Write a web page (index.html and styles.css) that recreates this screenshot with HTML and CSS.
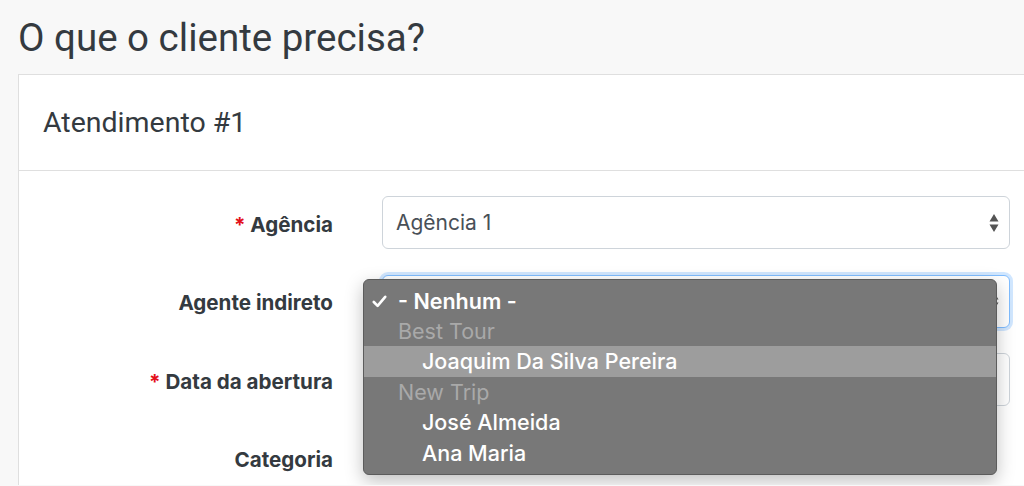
FILE: index.html
```html
<!DOCTYPE html>
<html lang="pt">
<head>
<meta charset="utf-8">
<title>Atendimento</title>
<link rel="stylesheet" href="styles.css">
</head>
<body>
<h1 class="page-title">O que o cliente precisa?</h1>
<div class="card">
  <div class="card-header">Atendimento #1</div>
  <div class="card-body">
    <div class="form-row">
      <label class="form-label"><span class="req">*</span> Agência</label>
      <div class="select">
        <span class="select-value">Agência 1</span>
        <svg class="select-arrows" width="10" height="20" viewBox="0 0 10 20"><path d="M5 1 L9.5 8.5 H0.5 Z M5 19 L9.5 11.5 H0.5 Z" fill="#555"/></svg>
      </div>
    </div>
    <div class="form-row">
      <label class="form-label">Agente indireto</label>
      <div class="select select-focus">
        <span class="select-value"></span>
        <svg class="select-arrows" width="10" height="20" viewBox="0 0 10 20"><path d="M5 1 L9.5 8.5 H0.5 Z M5 19 L9.5 11.5 H0.5 Z" fill="#555"/></svg>
      </div>
      <ul class="menu">
        <li class="menu-item menu-checked">
          <svg class="check" width="15" height="13" viewBox="0 0 15 13"><path d="M1.8 7 L5.6 10.8 L13.2 1.8" fill="none" stroke="#fff" stroke-width="2.6" stroke-linecap="round" stroke-linejoin="round"/></svg>
          - Nenhum -
        </li>
        <li class="menu-item menu-group">Best Tour</li>
        <li class="menu-item menu-sub menu-hover">Joaquim Da Silva Pereira</li>
        <li class="menu-item menu-group">New Trip</li>
        <li class="menu-item menu-sub">José Almeida</li>
        <li class="menu-item menu-sub">Ana Maria</li>
      </ul>
    </div>
    <div class="form-row">
      <label class="form-label"><span class="req">*</span> Data da abertura</label>
      <div class="input"></div>
    </div>
    <div class="form-row">
      <label class="form-label">Categoria</label>
      <div class="blank"></div>
    </div>
  </div>
</div>
</body>
</html>
```

FILE: styles.css
```css
html, body {
  margin: 0;
  padding: 0;
}
body {
  background: #f8f8f8;
  font-family: Inter, Roboto, "Liberation Sans", sans-serif;
  color: #343a40;
  overflow: hidden;
  height: 486px;
}
.page-title {
  margin: 0;
  height: 74px;
  box-sizing: border-box;
  padding: 15px 18px 0;
  font-family: Roboto, "Liberation Sans", sans-serif;
  font-weight: 400;
  font-size: 38.5px;
  line-height: 46px;
  color: #343a40;
}
.card {
  margin-left: 18px;
  width: 1020px;
  background: #fff;
  border: 1px solid #dfdfdf;
  border-right: none;
  border-bottom: none;
  height: 411px;
  box-sizing: border-box;
  overflow: hidden;
}
.card-header {
  height: 96px;
  box-sizing: border-box;
  display: flex;
  align-items: center;
  padding: 0 24px;
  border-bottom: 1px solid #dfdfdf;
  font-family: Roboto, "Liberation Sans", sans-serif;
  font-size: 28.5px;
  color: #343a40;
  background: #fff;
}
.card-body {
  padding-top: 25px;
  display: flex;
  flex-direction: column;
  gap: 25.5px;
}
.form-row {
  position: relative;
  display: grid;
  grid-template-columns: 314px 628px;
  column-gap: 49px;
  height: 53px;
  align-items: center;
}
.form-label {
  text-align: right;
  font-weight: 700;
  font-size: 20.6px;
  color: #343a40;
  padding-top: 3px;
}
.req {
  color: #e3101b;
}
.select, .input {
  height: 53px;
  box-sizing: border-box;
  border: 1px solid #ced4da;
  border-radius: 6px;
  background: #fff;
  display: flex;
  align-items: center;
  padding: 0 13px;
}
.select-value {
  flex: 1;
  font-size: 21px;
  color: #495057;
}
.select-arrows {
  margin-right: -3px;
}
.select-focus {
  border-color: #80bdff;
  box-shadow: 0 0 0 3px rgba(0, 123, 255, 0.18);
}
.menu {
  position: absolute;
  left: 344px;
  top: 4px;
  width: 634px;
  height: 196px;
  box-sizing: border-box;
  margin: 0;
  padding: 6px 0 0;
  list-style: none;
  background: #787878;
  border: 1px solid #5c5c5c;
  border-radius: 6px;
  box-shadow: 0 6px 18px rgba(0, 0, 0, 0.25);
  z-index: 2;
}
.menu-item {
  height: 30.4px;
  display: flex;
  align-items: center;
  padding-left: 34px;
  font-size: 21.5px;
  font-weight: 500;
  color: #fff;
  position: relative;
}
.menu-checked {
  font-weight: 600;
}
.check {
  position: absolute;
  left: 8px;
  top: 9px;
}
.menu-group {
  color: #a9a9a9;
  font-weight: 400;
}
.menu-sub {
  padding-left: 58px;
}
.menu-hover {
  background: #9d9d9d;
}
```
